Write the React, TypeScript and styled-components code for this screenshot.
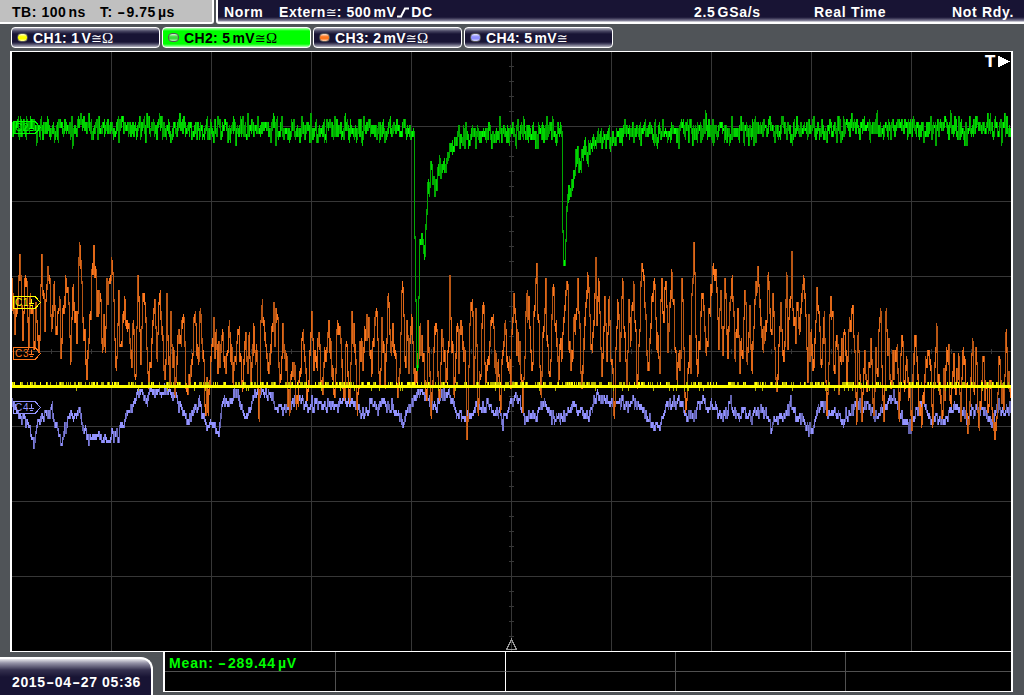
import { ReactNode } from "react"
import styled, { createGlobalStyle } from "styled-components"

type Point = [number, number]

type Bars = { bright: string; mid: string; dim: string }

const LEFT = 12
const RIGHT = 1011

const GREEN: Point[] = [
    [12, 128], [150, 128], [300, 129], [413, 129], [414, 131], [415, 237], [416, 300], [417, 373], [418, 366],
    [419, 298], [420, 238], [422, 235], [423, 243], [425, 256], [426, 225], [427, 213], [428, 192], [430, 184],
    [431, 167], [433, 178], [435, 193], [437, 174], [439, 167], [442, 170], [447, 157], [452, 145], [458, 141],
    [465, 140], [473, 136], [490, 134], [517, 132], [560, 130], [562, 133], [563, 230], [564, 264], [565, 264],
    [566, 240], [567, 207], [569, 186], [571, 182], [573, 187], [574, 168], [576, 159], [578, 154], [580, 162],
    [583, 157], [587, 152], [597, 141], [607, 136], [623, 133], [680, 131], [800, 129], [1011, 128],
]

const ORANGE: Point[] = [
    [12, 280], [15, 333], [20, 259], [23, 339], [25, 280], [29, 345], [30, 298], [35, 345], [36, 303], [39, 348],
    [42, 256], [45, 330], [48, 272], [52, 325], [54, 287], [56, 330], [59, 310], [62, 341], [66, 281], [68, 290],
    [71, 360], [73, 289], [77, 341], [80, 247], [83, 320], [85, 330], [87, 378], [90, 315], [94, 247], [97, 315],
    [100, 294], [103, 348], [109, 283], [113, 272], [116, 366], [119, 290], [121, 345], [125, 299], [129, 325],
    [132, 366], [133, 325], [136, 375], [138, 277], [141, 363], [143, 295], [146, 318], [149, 383], [155, 299],
    [157, 357], [160, 295], [165, 375], [167, 295], [170, 384], [171, 313], [176, 380], [179, 332], [184, 319],
    [186, 387], [190, 380], [194, 319], [197, 355], [201, 317], [205, 405], [210, 383], [214, 319], [218, 373],
    [222, 340], [226, 373], [230, 333], [233, 382], [238, 332], [242, 385], [246, 335], [251, 383], [254, 327],
    [257, 350], [259, 417], [262, 305], [268, 367], [272, 328], [278, 317], [280, 380], [283, 325], [289, 393],
    [293, 365], [297, 397], [303, 333], [307, 398], [310, 350], [312, 313], [314, 370], [319, 337], [323, 393],
    [329, 322], [334, 393], [337, 330], [340, 328], [345, 397], [347, 345], [350, 398], [352, 313], [358, 393],
    [362, 343], [363, 370], [367, 316], [372, 373], [376, 313], [380, 383], [382, 318], [385, 383], [388, 298],
    [391, 350], [393, 325], [398, 397], [403, 287], [405, 360], [407, 322], [409, 373], [412, 318], [415, 383],
    [420, 328], [423, 360], [427, 398], [428, 322], [431, 413], [436, 325], [440, 397], [442, 330], [447, 373],
    [449, 345], [450, 277], [452, 350], [454, 393], [457, 328], [459, 373], [461, 325], [465, 350], [467, 438],
    [470, 325], [473, 313], [474, 383], [476, 310], [478, 412], [483, 310], [486, 380], [490, 345], [493, 318],
    [500, 397], [505, 325], [511, 387], [514, 298], [519, 360], [520, 343], [523, 410], [527, 295], [532, 367],
    [535, 310], [537, 265], [541, 393], [546, 280], [549, 373], [554, 289], [559, 378], [564, 320], [567, 286],
    [571, 367], [575, 330], [578, 280], [582, 383], [588, 277], [591, 347], [594, 320], [596, 259], [597, 325],
    [599, 283], [602, 375], [605, 298], [607, 360], [609, 300], [614, 413], [618, 303], [620, 360], [623, 283],
    [627, 385], [629, 300], [631, 340], [634, 286], [638, 378], [641, 283], [644, 277], [648, 367], [654, 283],
    [660, 373], [662, 280], [664, 320], [666, 285], [668, 350], [672, 272], [677, 378], [680, 367], [682, 280],
    [686, 407], [690, 337], [691, 373], [694, 244], [697, 363], [703, 298], [707, 343], [711, 288], [714, 271],
    [716, 272], [719, 348], [721, 292], [723, 353], [725, 280], [728, 357], [732, 280], [735, 357], [738, 313],
    [740, 372], [746, 302], [747, 360], [750, 305], [752, 367], [755, 300], [758, 271], [763, 347], [766, 325],
    [769, 287], [772, 333], [773, 293], [777, 387], [781, 302], [784, 357], [787, 277], [788, 348], [792, 253],
    [793, 310], [796, 343], [797, 302], [799, 323], [804, 280], [808, 380], [809, 315], [813, 367], [817, 289],
    [821, 363], [824, 317], [827, 413], [830, 315], [833, 313], [834, 370], [837, 337], [839, 393], [842, 340],
    [845, 332], [847, 380], [852, 310], [857, 420], [858, 335], [862, 420], [865, 350], [867, 387], [871, 340],
    [874, 413], [876, 347], [878, 375], [880, 319], [884, 420], [886, 313], [891, 387], [895, 352], [897, 348],
    [899, 417], [902, 337], [904, 380], [907, 360], [912, 428], [915, 337], [918, 375], [922, 423], [928, 352],
    [933, 423], [936, 350], [942, 413], [947, 352], [951, 403], [954, 355], [956, 392], [959, 357], [961, 420],
    [963, 352], [968, 429], [972, 355], [974, 390], [977, 362], [979, 427], [983, 358], [988, 407], [991, 380],
    [995, 435], [999, 358], [1001, 380], [1004, 407], [1006, 332], [1008, 385], [1011, 393],
]

const BLUE: Point[] = [
    [12, 402], [20, 417], [25, 418], [30, 430], [34, 448], [38, 422], [45, 413], [52, 412], [57, 427], [62, 443],
    [65, 427], [71, 412], [74, 423], [79, 408], [83, 425], [89, 438], [97, 434], [108, 439], [112, 434], [118, 437],
    [123, 423], [132, 405], [138, 390], [147, 398], [152, 391], [157, 396], [165, 388], [172, 392], [182, 407],
    [187, 421], [192, 413], [199, 400], [204, 416], [208, 426], [213, 423], [219, 434], [223, 397], [230, 403],
    [237, 390], [246, 420], [256, 390], [263, 392], [272, 396], [278, 411], [290, 405], [298, 398], [307, 408],
    [320, 402], [337, 407], [340, 401], [357, 405], [365, 415], [372, 402], [377, 411], [383, 402], [393, 408],
    [403, 421], [412, 402], [420, 391], [427, 397], [436, 410], [442, 393], [450, 393], [457, 413], [470, 418],
    [478, 402], [483, 410], [488, 403], [493, 413], [498, 410], [503, 421], [510, 403], [517, 396], [525, 415],
    [537, 415], [543, 403], [552, 415], [565, 419], [574, 400], [578, 410], [588, 415], [598, 397], [613, 403],
    [623, 400], [628, 410], [633, 398], [642, 408], [652, 423], [660, 424], [667, 405], [679, 400], [687, 417],
    [693, 415], [702, 398], [707, 407], [712, 405], [717, 412], [724, 418], [731, 400], [737, 415], [743, 410],
    [753, 415], [763, 409], [772, 426], [780, 417], [785, 417], [791, 400], [797, 417], [803, 419], [812, 431],
    [817, 413], [822, 405], [828, 410], [837, 412], [843, 421], [852, 410], [857, 400], [862, 408], [867, 402],
    [875, 418], [882, 408], [887, 407], [894, 392], [898, 410], [905, 419], [912, 425], [917, 413], [922, 397],
    [930, 419], [938, 417], [945, 423], [952, 407], [960, 408], [967, 419], [973, 410], [982, 407], [992, 422],
    [997, 403], [1003, 412], [1011, 408],
]

// small seeded generator, so the traces look the same on every render
const createRandom = (seed: number) => {
    let s = seed
    return () => {
        s = (s * 1664525 + 1013904223) % 4294967296
        return s / 4294967296
    }
}

const sampleTrace = (points: Point[], noise: number, seed: number, keepPeaks = false) => {
    const random = createRandom(seed)
    const samples: number[] = []
    let k = 0
    for (let x = LEFT; x <= RIGHT; x++) {
        while (k < points.length - 2 && points[k + 1][0] <= x) k++
        const [x0, y0] = points[k]
        const [x1, y1] = points[k + 1]
        const base = y0 + ((y1 - y0) * (x - x0)) / (x1 - x0)
        const steep = Math.abs(y1 - y0) / (x1 - x0) > 8
        const gauss = random() + random() + random() - 1.5
        const still = keepPeaks ? x === x0 || x === x1 : steep
        samples.push(still ? base : base + gauss * noise)
    }
    return samples
}

// one vertical bar per column, snapped to the 3px levels of the converter
const toBars = (samples: number[], spread: number, seed: number, limit = 6): Bars => {
    const random = createRandom(seed)
    const bars: Bars = { bright: "", mid: "", dim: "" }
    for (let i = 1; i < samples.length; i++) {
        const calm = Math.abs(samples[i] - samples[i - 1]) < 25
        const grow = calm ? spread : 0
        const a = Math.round((Math.min(samples[i - 1], samples[i]) - random() * grow) / 3) * 3
        const b = Math.round((Math.max(samples[i - 1], samples[i]) + random() * grow) / 3) * 3
        const length = b - a + 3
        const key = length <= limit ? "bright" : length <= limit * 3 && random() < 0.6 ? "mid" : "dim"
        bars[key] += `M${LEFT + i - 0.5} ${a - 1}V${b + 2}`
    }
    return bars
}

const yellowBars = (): Bars => {
    const random = createRandom(77)
    const bars: Bars = { bright: "", mid: "", dim: "" }
    let on = false
    for (let x = LEFT; x < RIGHT; x++) {
        if (random() < (on ? 0.45 : 0.35)) on = !on
        const key = random() < 0.3 ? "bright" : "dim"
        if (on) bars[key] += `M${x + 0.5} 382V385`
        if (random() < 0.05) bars.dim += `M${x + 0.5} 388V391`
    }
    return bars
}

const TRACES = [
    { bars: toBars(sampleTrace(BLUE, 6, 11), 1, 3), bright: "#9494ff", mid: "#7c7cdc", dim: "#6464b0" },
    { bars: toBars(sampleTrace(ORANGE, 26, 5, true), 4, 8, 12), bright: "#ff781e", mid: "#e06818", dim: "#b85614" },
    { bars: toBars(sampleTrace(GREEN, 11, 23), 4, 9), bright: "#00ff00", mid: "#00d400", dim: "#00a800" },
    { bars: yellowBars(), bright: "#ffff00", mid: "#dcdc00", dim: "#b4b400" },
]

const MARKERS = [
    { label: "C2", y: 121, color: "#00ff00" },
    { label: "C3", y: 347, color: "#ff781e" },
    { label: "C4", y: 401, color: "#9494ff" },
    { label: "C1", y: 296, color: "#ffff00" },
]

const CHANNELS = [
    { name: "CH1:", value: "1", unit: "V", ohm: true, led: "#ffff00" },
    { name: "CH2:", value: "5", unit: "mV", ohm: true, led: "#3cdc3c", active: true },
    { name: "CH3:", value: "2", unit: "mV", ohm: true, led: "#ff7820" },
    { name: "CH4:", value: "5", unit: "mV", ohm: false, led: "#9090ff" },
]

const range = (count: number) => Array.from({ length: count }, (_, i) => i)

const Graticule = () => (
    <g stroke="#373737">
        {range(9).map((i) => (
            <path key={i} d={`M${111.5 + i * 100} 52V651`} />
        ))}
        {range(7).map((i) => (
            <path key={i} d={`M12 ${126.5 + i * 75}H1011`} />
        ))}
        {range(39).map((i) => (
            <path key={i} d={`M509 ${66.5 + i * 15}h5`} />
        ))}
        {range(49).map((i) => (
            <path key={i} d={`M${31.5 + i * 20} 349v5`} />
        ))}
    </g>
)

const Marker = ({ label, y, color }: { label: string; y: number; color: string }) => (
    <g fill="none" stroke={color}>
        <path d={`M13.5 ${y + 0.5}H35L40.5 ${y + 6.5}L35 ${y + 12.5}H13.5Z`} />
        <MarkerText x={15} y={y + 10} fill={color} stroke="none">
            {label}
        </MarkerText>
        <path d={`M31.5 ${y + 3}v5M29 ${y + 7.5}h5M30 ${y + 9.5}h3`} />
    </g>
)

const Screen = () => (
    <Plot viewBox="12 52 999 599" shapeRendering="crispEdges">
        <Graticule />
        {TRACES.map((t, i) => (
            <g key={i}>
                <path d={t.bars.dim} stroke={t.dim} />
                <path d={t.bars.mid} stroke={t.mid} />
                <path d={t.bars.bright} stroke={t.bright} />
            </g>
        ))}
        <path d="M12 386.5H1011" stroke="#ffff00" strokeWidth={3} />
        {MARKERS.map((m) => (
            <Marker key={m.label} {...m} />
        ))}
        <path d="M511.5 639.5L506.5 649.5H516.5Z" fill="none" stroke="#999" />
        <TriggerText x={985} y={67}>
            T
        </TriggerText>
        <path d="M998 55.5L1010 61.5L998 67.5Z" fill="#fff" />
    </Plot>
)

const Reading = ({ value, unit }: { value: ReactNode; unit: string }) => (
    <>
        {value}
        <Unit>{unit}</Unit>
    </>
)

export default function App() {
    return (
        <Scope>
            <GlobalStyle />
            <Header>
                <TimeBase>
                    <span>
                        TB: <Reading value="100" unit="ns" />
                    </span>
                    <span>
                        T: <Dash>-</Dash>
                        <Reading value="9.75" unit="µs" />
                    </span>
                </TimeBase>
                <Status>
                    <span>Norm</span>
                    <Trigger>
                        Extern<Symbol>≅</Symbol>: <Reading value="500" unit="mV" />
                        <Edge width="14" height="11" viewBox="0 0 14 11">
                            <path d="M1 9.5H5L9 1.5H13" fill="none" stroke="#fff" strokeWidth="2" />
                        </Edge>
                        DC
                    </Trigger>
                    <span>
                        <Reading value="2.5" unit="GSa/s" />
                    </span>
                    <span>Real Time</span>
                    <span>Not Rdy.</span>
                </Status>
            </Header>
            <Channels>
                {CHANNELS.map((c) => (
                    <Channel key={c.name} $active={c.active}>
                        <Led $color={c.led} />
                        <span>
                            {c.name} <Reading value={c.value} unit={c.unit} />
                            <Symbol>≅</Symbol>
                            {c.ohm && <Symbol $size={15}>Ω</Symbol>}
                        </span>
                    </Channel>
                ))}
            </Channels>
            <Frame>
                <Screen />
            </Frame>
            <Footer>
                <DateTab>
                    2015<Dash>-</Dash>04<Dash>-</Dash>27 05:36
                </DateTab>
                <Measurements>
                    {range(10).map((i) => (
                        <Cell key={i} $strong={i % 5 === 1} $last={i % 5 === 4} $top={i < 5}>
                            {i === 0 && (
                                <span>
                                    Mean: <Dash>-</Dash>
                                    <Reading value="289.44" unit="µV" />
                                </span>
                            )}
                        </Cell>
                    ))}
                </Measurements>
            </Footer>
        </Scope>
    )
}

const GlobalStyle = createGlobalStyle`
    body {
        margin: 0;
        background: #505458;
    }

    * {
        box-sizing: border-box;
    }
`

const Scope = styled.div`
    display: flex;
    flex-direction: column;
    width: 1024px;
    height: 695px;
    overflow: hidden;
    background: #505458;
    color: #fff;
    font: bold 14px/16px "Liberation Sans", Arial, sans-serif;
    letter-spacing: 0.7px;
    white-space: nowrap;
`

const Header = styled.header`
    display: flex;
    gap: 2px;
    height: 24px;
`

const TimeBase = styled.div`
    display: grid;
    grid-template-columns: 88px 1fr;
    width: 214px;
    padding: 4px 0 0 12px;
    color: #000;
    background: #c0c0c0;
    border-right: 2px solid #fff;
    border-bottom: 2px solid #fff;
    border-bottom-right-radius: 3px;
    letter-spacing: 0.55px;
`

const Status = styled.div`
    display: grid;
    grid-template-columns: 55px 415px 120px 138px 1fr;
    flex: 1;
    padding: 4px 0 0 6px;
    background: linear-gradient(#181434 17px, #2c2848 18px, #8c8aa0 21px, #fff 22px);
    border-left: 2px solid #fff;
    border-bottom-left-radius: 3px;
`

const Trigger = styled.span`
    letter-spacing: 0.55px;
`

const Unit = styled.span`
    margin-left: 2px;
`

const Dash = styled.span`
    display: inline-block;
    margin: 0 2px;
    transform: scaleX(1.7);
`

const Symbol = styled.span<{ $size?: number }>`
    font-family: "Liberation Serif", "DejaVu Sans", serif;
    font-size: ${(props) => props.$size ?? 13}px;
    font-weight: 400;
    line-height: 14px;
    letter-spacing: 0;
`

const Edge = styled.svg`
    margin-right: 1px;
    vertical-align: -1px;
`

const Channels = styled.div`
    display: flex;
    gap: 2px;
    height: 27px;
    padding: 3px 0 3px 11px;
`

const Channel = styled.div<{ $active?: boolean }>`
    display: flex;
    align-items: center;
    gap: 5px;
    width: 149px;
    height: 21px;
    padding-left: 5px;
    border: 1px solid #fff;
    border-radius: 4px;
    letter-spacing: 0.35px;
    color: ${(props) => (props.$active ? "#000" : "#fff")};
    background: ${(props) =>
        props.$active
            ? "linear-gradient(#b4ffb4, #00ff00 3px, #00ff00 16px, #b4ffb4)"
            : "linear-gradient(#b4b4c0, #4a4864 3px, #181434 6px, #181434 14px, #4a4864 16px, #b4b4c0)"};
`

const Led = styled.i<{ $color: string }>`
    width: 11px;
    height: 9px;
    border: 1px solid #555;
    border-radius: 4px;
    background: linear-gradient(#fff -10%, ${(props) => props.$color} 40%, ${(props) => props.$color} 65%, #fff 120%);
`

const Frame = styled.main`
    width: 1003px;
    height: 601px;
    margin-left: 10px;
    border: solid #fff;
    border-width: 1px 2px;
    background: #000;
`

const Plot = styled.svg`
    display: block;
    width: 999px;
    height: 599px;
`

const MarkerText = styled.text`
    font: 10px "Liberation Sans", Arial, sans-serif;
`

const TriggerText = styled.text`
    font: bold 15px "DejaVu Sans", sans-serif;
    fill: #fff;
`

const Footer = styled.footer`
    display: flex;
    gap: 10px;
    height: 43px;
`

const DateTab = styled.div`
    width: 153px;
    height: 38px;
    margin-top: 5px;
    padding: 15px 0 0 12px;
    border: solid #fff;
    border-width: 2px 2px 0 0;
    border-top-right-radius: 12px;
    background: linear-gradient(#e8e8ec, #9694a8 4px, #34304e 11px, #181434 18px);
    letter-spacing: 0.6px;
`

const Measurements = styled.div`
    display: grid;
    grid-template-columns: 171px 170px 170px 170px 1fr;
    grid-template-rows: 20px 19px;
    width: 850px;
    height: 40px;
    border: solid #fff;
    border-width: 0 2px 1px;
    background: #000;
    color: #00ff00;
    letter-spacing: 0.85px;
`

const Cell = styled.div<{ $strong: boolean; $last: boolean; $top: boolean }>`
    padding: 3px 0 0 4px;
    border-right: ${(props) => (props.$last ? "none" : `1px solid ${props.$strong ? "#fff" : "#505050"}`)};
    border-bottom: ${(props) => (props.$top ? "1px solid #505050" : "none")};
`
